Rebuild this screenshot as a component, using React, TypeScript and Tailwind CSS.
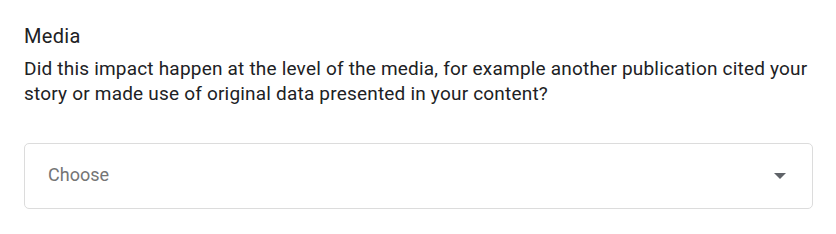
export default function App() {
  return (
    <div className="w-[836px] h-[234px] bg-white px-6 pt-[24px]" style={{ fontFamily: "Roboto, 'Liberation Sans', sans-serif" }}>
      <div className="text-[20px] leading-[24px] tracking-[0.3px] text-[#202124]">Media</div>
      <p className="mt-[8px] text-[19px] leading-[25px] tracking-[0.2px] text-[#202124]">
        Did this impact happen at the level of the media, for example another publication cited your story or made use of original data presented in your content?
      </p>
      <div className="mt-[37px] h-[66px] w-[789px] rounded-[5px] border border-[#dcdcdc] flex items-center justify-between pl-[23px] pr-[26px]">
        <span className="text-[18px] leading-[22px] pb-[2px] text-[#757575]">Choose</span>
        <svg width="12" height="6" viewBox="0 0 12 6" className="fill-[#5f6368]">
          <path d="M0 0 L12 0 L6 6 Z" />
        </svg>
      </div>
    </div>
  );
}
